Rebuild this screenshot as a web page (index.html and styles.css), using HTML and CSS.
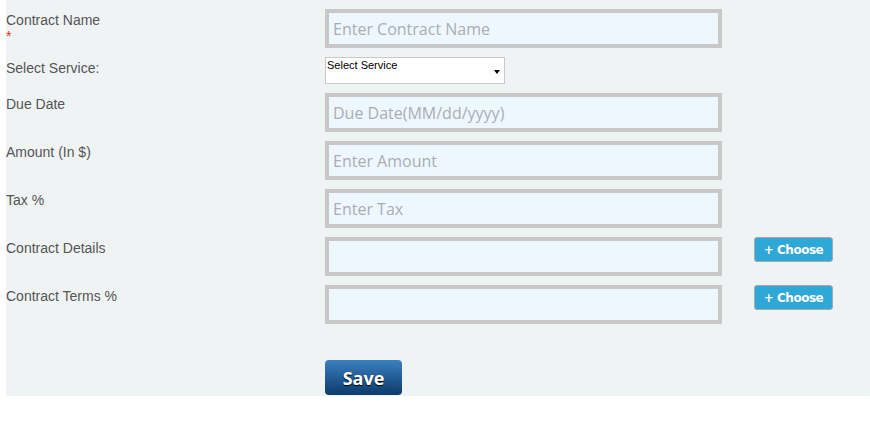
FILE: index.html
```html
<!DOCTYPE html>
<html lang="en">
<head>
	<meta charset="UTF-8">
	<title>Contract</title>
	<link rel="stylesheet" href="styles.css">
</head>
<body>
    <div class="panel">
        <div class="form_grid">
            <label class="field_label">Contract Name<span class="req">*</span></label>
            <input class="text_fill" type="text" placeholder="Enter Contract Name"/>
            <span></span>

            <label class="field_label">Select Service:</label>
            <div class="select_wrap">
                <select class="service_select">
                    <option>Select Service</option>
                </select>
            </div>
            <span></span>

            <label class="field_label">Due Date</label>
            <input class="text_fill" type="text" placeholder="Due Date(MM/dd/yyyy)"/>
            <span></span>

            <label class="field_label">Amount (In $)</label>
            <input class="text_fill" type="text" placeholder="Enter Amount"/>
            <span></span>

            <label class="field_label">Tax %</label>
            <input class="text_fill" type="text" placeholder="Enter Tax"/>
            <span></span>

            <label class="field_label">Contract Details</label>
            <input class="text_fill" type="text"/>
            <div><button class="btn_choose">+ Choose</button></div>

            <label class="field_label">Contract Terms %</label>
            <input class="text_fill" type="text"/>
            <div><button class="btn_choose">+ Choose</button></div>

            <span></span>
            <div class="save_row"><button class="btn_save">Save</button></div>
            <span></span>
        </div>
    </div>
</body>
</html>
```

FILE: styles.css
```css
body{
	margin: 0;
	background: #fff;
}
.panel{
	margin-left: 6px;
	padding: 9px 0 1px 0;
	background: #f0f3f4;
}
.form_grid{
	display: grid;
	grid-template-columns: 287px 397px 79px;
	column-gap: 32px;
	row-gap: 9px;
	align-items: start;
}
.field_label{
	display: block;
	padding-top: 3px;
	font-family: "Liberation Sans", Arial, sans-serif;
	font-size: 14px;
	line-height: 16px;
	color: #555;
}
.req{
	display: block;
	color: #e8322b;
}
.text_fill{
	display: block;
	box-sizing: border-box;
	width: 397px;
	height: 39px;
	margin: 0;
	padding: 0 4px;
	border: 4px solid #c8c8c8;
	background: #eff7fe;
	font-family: "Open Sans", sans-serif;
	font-size: 16px;
	color: #555;
	outline: none;
}
.text_fill::placeholder{
	color: #a9aeb3;
}
.select_wrap{
	position: relative;
	width: 180px;
	height: 27px;
}
.select_wrap::after{
	content: "";
	position: absolute;
	right: 5px;
	top: 13px;
	border-left: 3px solid transparent;
	border-right: 3px solid transparent;
	border-top: 4px solid #000;
}
.service_select{
	display: block;
	-webkit-appearance: none;
	appearance: none;
	box-sizing: border-box;
	width: 180px;
	height: 27px;
	margin: 0;
	padding: 0 0 11px 1px;
	border: 1px solid #c9c9c9;
	border-radius: 0;
	background: #fff;
	font-family: "Liberation Sans", Arial, sans-serif;
	font-size: 11px;
	color: #000;
}
.btn_choose{
	display: block;
	box-sizing: border-box;
	width: 79px;
	height: 25px;
	padding: 0;
	border: 1px solid #a3a9ad;
	border-radius: 3px;
	background: #2ea9d7;
	color: #fff;
	font-family: "DejaVu Sans", Verdana, sans-serif;
	font-weight: bold;
	font-size: 12px;
	letter-spacing: -0.5px;
}
.save_row{
	margin-top: 27px;
}
.btn_save{
	display: block;
	width: 77px;
	height: 35px;
	padding: 0;
	border: none;
	border-radius: 4px;
	background: linear-gradient(#3b80c1, #0c3a6b);
	color: #fff;
	font-family: "Open Sans", sans-serif;
	font-weight: bold;
	font-size: 18px;
	text-shadow: 0 1px 1px #000;
}
```
